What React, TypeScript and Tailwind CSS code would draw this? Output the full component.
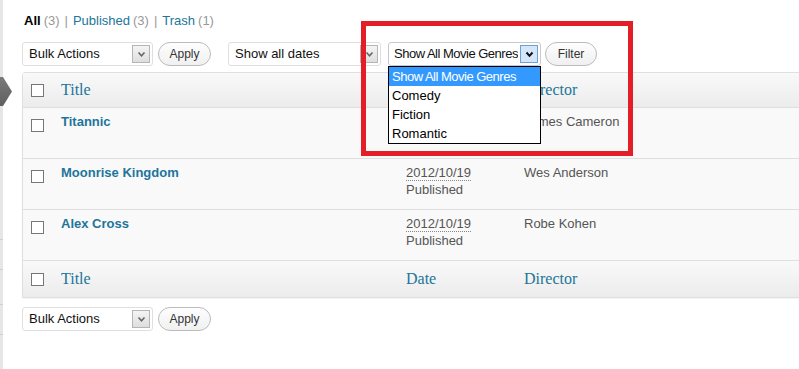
import React from "react";

const Arrow = ({ active = false }: { active?: boolean }) => (
  <span
    className={
      active
        ? "flex h-[18px] w-[18px] shrink-0 items-center justify-center border border-[#6e9fd6] bg-[#d3e6fa]"
        : "flex h-[18px] w-[18px] shrink-0 items-center justify-center border border-[#b5b5b5] bg-gradient-to-b from-[#f4f4f4] to-[#dedede]"
    }
  >
    <svg width="9" height="7" viewBox="0 0 9 7">
      <path
        d="M1.5 1.5 L4.5 4.8 L7.5 1.5"
        fill="none"
        stroke={active ? "#111" : "#666"}
        strokeWidth={active ? 2 : 1.6}
      />
    </svg>
  </span>
);

const Select = ({ label, w, active = false }: { label: string; w: string; active?: boolean }) => (
  <div
    className={`flex h-[24px] ${w} items-center justify-between rounded-[3px] border ${
      active ? "border-[#c9c9c9] pl-[5px] tracking-[-0.5px]" : "border-[#dfdfdf] pl-[6px]"
    } bg-white pr-[2px] text-[13px] text-[#111]`}
  >
    <span className="overflow-hidden whitespace-nowrap">{label}</span>
    <Arrow active={active} />
  </div>
);

const Btn = ({ label, w }: { label: string; w: string }) => (
  <div
    className={`flex h-[24px] ${w} items-center justify-center rounded-full border border-[#bbb] bg-gradient-to-b from-[#fefefe] to-[#f0f0f0] text-[12px] text-[#333]`}
  >
    {label}
  </div>
);

const Check = () => <span className="block h-[13px] w-[13px] border border-[#777] bg-white" />;

const HeadRow = ({ h }: { h: string }) => (
  <div
    className={`flex ${h} items-center bg-gradient-to-b from-[#f9f9f9] to-[#ececec] font-['Liberation_Serif',Georgia,serif] text-[16px] text-[#21759b]`}
  >
    <div className="flex w-[38px] pl-[8px]">
      <Check />
    </div>
    <div className="w-[345px]">Title</div>
    <div className="w-[118px]">Date</div>
    <div>Director</div>
  </div>
);

const Row = ({ title, date, director }: { title: string; date?: string; director: string }) => (
  <div className="flex h-[51px] border-t border-[#dfdfdf] bg-[#f9f9f9] pt-[5px] text-[13px] leading-[17px]">
    <div className="w-[38px] pl-[8px] pt-[6px]">
      <Check />
    </div>
    <div className="w-[345px] font-bold text-[#21759b]">{title}</div>
    <div className="w-[118px] text-[#555]">
      {date && (
        <>
          <span className="border-b border-dotted border-[#888]">{date}</span>
          <div>Published</div>
        </>
      )}
    </div>
    <div className="text-[#555]">{director}</div>
  </div>
);

export default function App() {
  return (
    <div className="relative flex h-[369px] w-[799px] overflow-hidden bg-white font-['Liberation_Sans',Arial,sans-serif] text-[13px]">
      {/* admin menu edge */}
      <div className="flex h-full w-[3px] shrink-0 flex-col bg-[#e6e6e6]">
        <div className="h-[240px] shrink-0 border-b border-[#cfcfcf]" />
        <div className="h-[30px] shrink-0 border-b border-[#cfcfcf]" />
        <div className="h-[35px] shrink-0 border-b border-[#cfcfcf]" />
        <div className="h-[30px] shrink-0 border-b border-[#cfcfcf]" />
      </div>
      <svg className="absolute left-0 top-[77px]" width="13" height="29" viewBox="0 0 13 29">
        <defs>
          <linearGradient id="ag" x1="0" y1="0" x2="0" y2="1">
            <stop offset="0" stopColor="#7a7a7a" />
            <stop offset="1" stopColor="#5f5f5f" />
          </linearGradient>
        </defs>
        <polygon points="0,0 3,0 12,14.5 3,29 0,29" fill="url(#ag)" />
      </svg>

      <div className="flex shrink-0 flex-col pl-[19px] pt-[12px]">
        {/* subsubsub */}
        <div className="flex h-[17px] items-center pl-[2px] text-[13px] leading-[17px]">
          <span className="font-bold text-black">All</span>
          <span className="ml-[3px] text-[#999]">(3)</span>
          <span className="mx-[5px] text-[#999]">|</span>
          <span className="text-[#21759b]">Published</span>
          <span className="ml-[3px] text-[#999]">(3)</span>
          <span className="mx-[5px] text-[#999]">|</span>
          <span className="text-[#21759b]">Trash</span>
          <span className="ml-[3px] text-[#999]">(1)</span>
        </div>

        {/* top tablenav */}
        <div className="mt-[13px] flex items-center">
          <Select label="Bulk Actions" w="w-[131px]" />
          <div className="ml-[5px]">
            <Btn label="Apply" w="w-[53px]" />
          </div>
          <div className="ml-[17px]">
            <Select label="Show all dates" w="w-[153px]" />
          </div>
          <div className="ml-[7px]">
            <Select label="Show All Movie Genres" w="w-[153px]" active />
          </div>
          <div className="ml-[4px]">
            <Btn label="Filter" w="w-[52px]" />
          </div>
        </div>

        {/* table */}
        <div className="mt-[6px] w-[800px] rounded-tl-[3px] border border-[#dfdfdf] shadow-[0_1px_1px_rgba(0,0,0,0.04)]">
          <HeadRow h="h-[34px]" />
          <Row title="Titannic" director="James Cameron" />
          <Row title="Moonrise Kingdom" date="2012/10/19" director="Wes Anderson" />
          <Row title="Alex Cross" date="2012/10/19" director="Robe Kohen" />
          <div className="border-t border-[#dfdfdf]">
            <HeadRow h="h-[36px]" />
          </div>
        </div>

        {/* bottom tablenav */}
        <div className="mt-[9px] flex items-center">
          <Select label="Bulk Actions" w="w-[131px]" />
          <div className="ml-[5px]">
            <Btn label="Apply" w="w-[53px]" />
          </div>
        </div>
      </div>

      {/* open dropdown list */}
      <div className="absolute left-[388px] top-[66px] w-[153px] border border-black bg-white text-[13px] leading-[19px] text-black">
        <div className="bg-[#3399ff] pl-[3px] tracking-[-0.5px] text-white">Show All Movie Genres</div>
        <div className="pl-[3px]">Comedy</div>
        <div className="pl-[3px]">Fiction</div>
        <div className="pl-[3px]">Romantic</div>
      </div>

      {/* red highlight frame */}
      <div className="absolute left-[361px] top-[21px] h-[135px] w-[272px] border-[5px] border-[#e31e26]" />
    </div>
  );
}
